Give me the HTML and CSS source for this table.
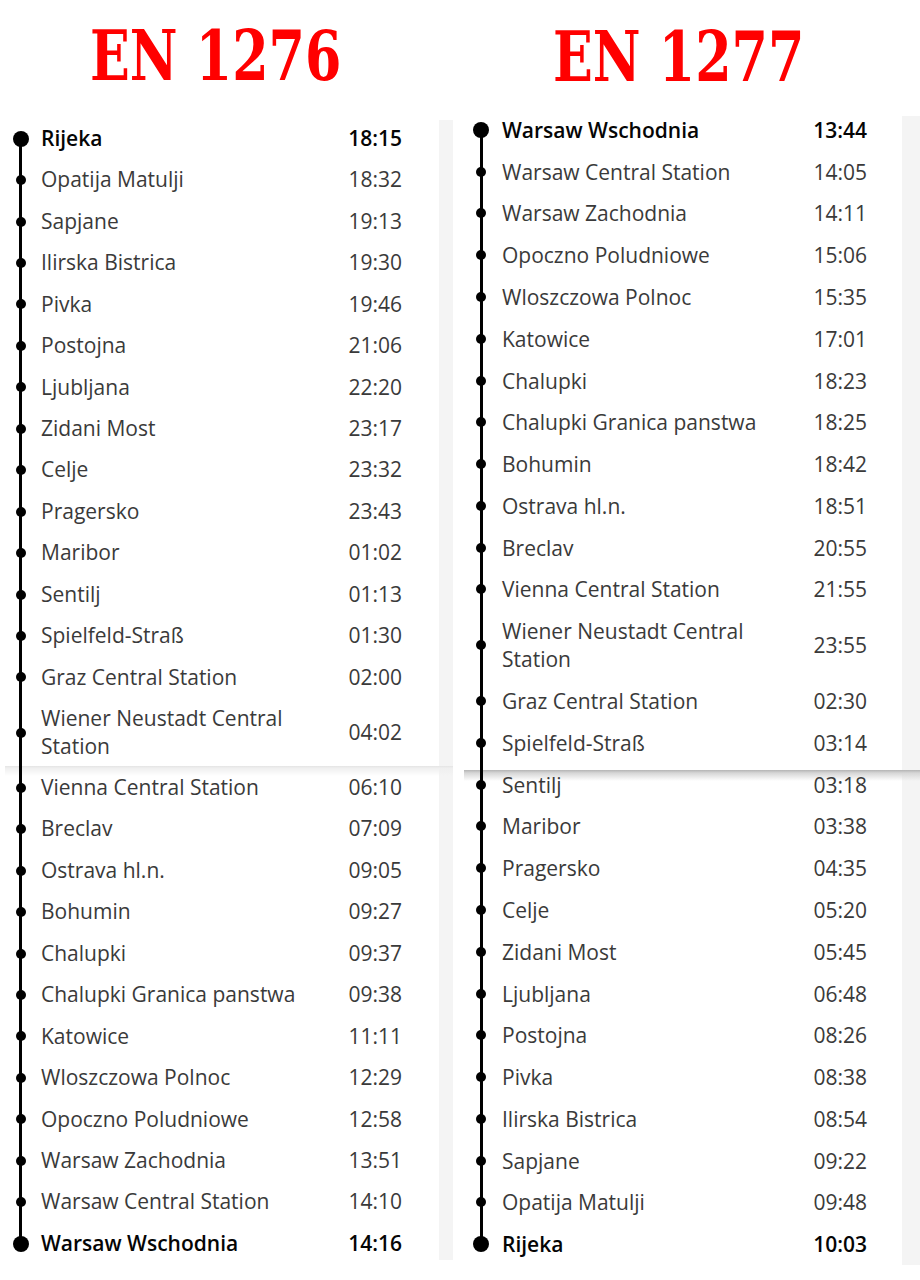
FILE: index.html
```html
<!DOCTYPE html>
<html lang="en">
<head>
<meta charset="utf-8">
<title>EN 1276 / EN 1277</title>
<link rel="stylesheet" href="styles.css">
</head>
<body>
<main class="page">
  <section class="col col--a">
    <h1 class="title"><span class="title__text">EN 1276</span></h1>
    <div class="panel">
      <div class="seam"></div>
      <ol class="stops">
        <li class="stop stop--first stop--end"><span class="mark"><span class="dot"></span></span><span class="name">Rijeka</span><span class="time">18:15</span></li>
        <li class="stop"><span class="mark"><span class="dot"></span></span><span class="name">Opatija Matulji</span><span class="time">18:32</span></li>
        <li class="stop"><span class="mark"><span class="dot"></span></span><span class="name">Sapjane</span><span class="time">19:13</span></li>
        <li class="stop"><span class="mark"><span class="dot"></span></span><span class="name">Ilirska Bistrica</span><span class="time">19:30</span></li>
        <li class="stop"><span class="mark"><span class="dot"></span></span><span class="name">Pivka</span><span class="time">19:46</span></li>
        <li class="stop"><span class="mark"><span class="dot"></span></span><span class="name">Postojna</span><span class="time">21:06</span></li>
        <li class="stop"><span class="mark"><span class="dot"></span></span><span class="name">Ljubljana</span><span class="time">22:20</span></li>
        <li class="stop"><span class="mark"><span class="dot"></span></span><span class="name">Zidani Most</span><span class="time">23:17</span></li>
        <li class="stop"><span class="mark"><span class="dot"></span></span><span class="name">Celje</span><span class="time">23:32</span></li>
        <li class="stop"><span class="mark"><span class="dot"></span></span><span class="name">Pragersko</span><span class="time">23:43</span></li>
        <li class="stop"><span class="mark"><span class="dot"></span></span><span class="name">Maribor</span><span class="time">01:02</span></li>
        <li class="stop"><span class="mark"><span class="dot"></span></span><span class="name">Sentilj</span><span class="time">01:13</span></li>
        <li class="stop"><span class="mark"><span class="dot"></span></span><span class="name">Spielfeld-Straß</span><span class="time">01:30</span></li>
        <li class="stop"><span class="mark"><span class="dot"></span></span><span class="name">Graz Central Station</span><span class="time">02:00</span></li>
        <li class="stop"><span class="mark"><span class="dot"></span></span><span class="name">Wiener Neustadt Central Station</span><span class="time">04:02</span></li>
        <li class="stop"><span class="mark"><span class="dot"></span></span><span class="name">Vienna Central Station</span><span class="time">06:10</span></li>
        <li class="stop"><span class="mark"><span class="dot"></span></span><span class="name">Breclav</span><span class="time">07:09</span></li>
        <li class="stop"><span class="mark"><span class="dot"></span></span><span class="name">Ostrava hl.n.</span><span class="time">09:05</span></li>
        <li class="stop"><span class="mark"><span class="dot"></span></span><span class="name">Bohumin</span><span class="time">09:27</span></li>
        <li class="stop"><span class="mark"><span class="dot"></span></span><span class="name">Chalupki</span><span class="time">09:37</span></li>
        <li class="stop"><span class="mark"><span class="dot"></span></span><span class="name">Chalupki Granica panstwa</span><span class="time">09:38</span></li>
        <li class="stop"><span class="mark"><span class="dot"></span></span><span class="name">Katowice</span><span class="time">11:11</span></li>
        <li class="stop"><span class="mark"><span class="dot"></span></span><span class="name">Wloszczowa Polnoc</span><span class="time">12:29</span></li>
        <li class="stop"><span class="mark"><span class="dot"></span></span><span class="name">Opoczno Poludniowe</span><span class="time">12:58</span></li>
        <li class="stop"><span class="mark"><span class="dot"></span></span><span class="name">Warsaw Zachodnia</span><span class="time">13:51</span></li>
        <li class="stop"><span class="mark"><span class="dot"></span></span><span class="name">Warsaw Central Station</span><span class="time">14:10</span></li>
        <li class="stop stop--last stop--end"><span class="mark"><span class="dot"></span></span><span class="name">Warsaw Wschodnia</span><span class="time">14:16</span></li>
      </ol>
      <div class="strip"></div>
    </div>
  </section>

  <section class="col col--b">
    <h1 class="title"><span class="title__text">EN 1277</span></h1>
    <div class="panel">
      <div class="seam"></div>
      <ol class="stops">
        <li class="stop stop--first stop--end"><span class="mark"><span class="dot"></span></span><span class="name">Warsaw Wschodnia</span><span class="time">13:44</span></li>
        <li class="stop"><span class="mark"><span class="dot"></span></span><span class="name">Warsaw Central Station</span><span class="time">14:05</span></li>
        <li class="stop"><span class="mark"><span class="dot"></span></span><span class="name">Warsaw Zachodnia</span><span class="time">14:11</span></li>
        <li class="stop"><span class="mark"><span class="dot"></span></span><span class="name">Opoczno Poludniowe</span><span class="time">15:06</span></li>
        <li class="stop"><span class="mark"><span class="dot"></span></span><span class="name">Wloszczowa Polnoc</span><span class="time">15:35</span></li>
        <li class="stop"><span class="mark"><span class="dot"></span></span><span class="name">Katowice</span><span class="time">17:01</span></li>
        <li class="stop"><span class="mark"><span class="dot"></span></span><span class="name">Chalupki</span><span class="time">18:23</span></li>
        <li class="stop"><span class="mark"><span class="dot"></span></span><span class="name">Chalupki Granica panstwa</span><span class="time">18:25</span></li>
        <li class="stop"><span class="mark"><span class="dot"></span></span><span class="name">Bohumin</span><span class="time">18:42</span></li>
        <li class="stop"><span class="mark"><span class="dot"></span></span><span class="name">Ostrava hl.n.</span><span class="time">18:51</span></li>
        <li class="stop"><span class="mark"><span class="dot"></span></span><span class="name">Breclav</span><span class="time">20:55</span></li>
        <li class="stop"><span class="mark"><span class="dot"></span></span><span class="name">Vienna Central Station</span><span class="time">21:55</span></li>
        <li class="stop"><span class="mark"><span class="dot"></span></span><span class="name">Wiener Neustadt Central Station</span><span class="time">23:55</span></li>
        <li class="stop"><span class="mark"><span class="dot"></span></span><span class="name">Graz Central Station</span><span class="time">02:30</span></li>
        <li class="stop"><span class="mark"><span class="dot"></span></span><span class="name">Spielfeld-Straß</span><span class="time">03:14</span></li>
        <li class="stop"><span class="mark"><span class="dot"></span></span><span class="name">Sentilj</span><span class="time">03:18</span></li>
        <li class="stop"><span class="mark"><span class="dot"></span></span><span class="name">Maribor</span><span class="time">03:38</span></li>
        <li class="stop"><span class="mark"><span class="dot"></span></span><span class="name">Pragersko</span><span class="time">04:35</span></li>
        <li class="stop"><span class="mark"><span class="dot"></span></span><span class="name">Celje</span><span class="time">05:20</span></li>
        <li class="stop"><span class="mark"><span class="dot"></span></span><span class="name">Zidani Most</span><span class="time">05:45</span></li>
        <li class="stop"><span class="mark"><span class="dot"></span></span><span class="name">Ljubljana</span><span class="time">06:48</span></li>
        <li class="stop"><span class="mark"><span class="dot"></span></span><span class="name">Postojna</span><span class="time">08:26</span></li>
        <li class="stop"><span class="mark"><span class="dot"></span></span><span class="name">Pivka</span><span class="time">08:38</span></li>
        <li class="stop"><span class="mark"><span class="dot"></span></span><span class="name">Ilirska Bistrica</span><span class="time">08:54</span></li>
        <li class="stop"><span class="mark"><span class="dot"></span></span><span class="name">Sapjane</span><span class="time">09:22</span></li>
        <li class="stop"><span class="mark"><span class="dot"></span></span><span class="name">Opatija Matulji</span><span class="time">09:48</span></li>
        <li class="stop stop--last stop--end"><span class="mark"><span class="dot"></span></span><span class="name">Rijeka</span><span class="time">10:03</span></li>
      </ol>
      <div class="strip"></div>
    </div>
  </section>
</main>
</body>
</html>
```

FILE: styles.css
```css
html, body {
  margin: 0;
  padding: 0;
  background: #ffffff;
}

body {
  font-family: "Open Sans", "Noto Sans", sans-serif;
}

.page {
  display: grid;
  grid-template-columns: 460px 460px;
  width: 920px;
  height: 1280px;
  overflow: hidden;
}

.col {
  display: flex;
  flex-direction: column;
}

.title {
  margin: 0;
  box-sizing: border-box;
  font-family: "DejaVu Serif Condensed", "DejaVu Serif", serif;
  font-weight: 700;
  font-size: 70px;
  line-height: 70px;
  color: #ff0000;
  white-space: nowrap;
}

.title__text {
  display: inline-block;
  transform: scaleX(0.83);
  transform-origin: 0 50%;
}

.col--a .title {
  height: 118px;
  padding: 21px 0 0 90px;
}

.col--b .title {
  height: 109px;
  padding: 22px 0 0 93px;
}

.panel {
  position: relative;
  display: flex;
}

.col--a .panel {
  width: 453px;
}

.col--b .panel {
  width: 460px;
}

.seam {
  position: absolute;
  right: 0;
  height: 12px;
  pointer-events: none;
}

.col--a .seam {
  left: 5px;
  top: 648px;
  background: linear-gradient(#e4e4e4 0, #efefef 2px, rgba(255, 255, 255, 0) 10px);
}

.col--b .seam {
  left: 4px;
  top: 661px;
  background: linear-gradient(#b4b4b4 0, #d6d6d6 3px, rgba(255, 255, 255, 0) 11px);
}

.stops {
  position: relative;
  list-style: none;
  margin: 0;
  flex: 1;
}

.col--a .stops {
  padding: 0 37px 0 0;
}

.col--b .stops {
  padding: 0 35px 0 0;
}

.strip {
  flex: 0 0 auto;
  background: #f4f4f4;
}

.col--a .strip {
  width: 14px;
  margin: 2px 0 4px;
}

.col--b .strip {
  width: 18px;
  margin: 7px 0 0;
}

.stop {
  display: flex;
  align-items: center;
  font-size: 21px;
  color: #3a3a3a;
  background-image: linear-gradient(#000000, #000000);
  background-repeat: no-repeat;
  background-size: 3px 100%;
}

.col--a .stop {
  line-height: 27.5px;
  padding: 6.975px 0;
  background-position: 19px 0;
}

.col--b .stop {
  line-height: 28px;
  padding: 6.9px 0;
  background-position: 20px 0;
}

.col--a .stop--first,
.col--b .stop--first {
  background-size: 3px 50%;
  background-position-y: 100%;
}

.col--a .stop--last,
.col--b .stop--last {
  background-size: 3px 50%;
  background-position-y: 0;
}

.mark {
  display: flex;
  justify-content: center;
  align-items: center;
}

.col--a .mark {
  flex: 0 0 41px;
}

.col--b .mark {
  flex: 0 0 42px;
}

.dot {
  width: 10px;
  height: 10px;
  border-radius: 50%;
  background: #000000;
}

.stop--end .dot {
  width: 16px;
  height: 16px;
}

.name {
  flex: 1;
}

.time {
  flex: 0 0 80px;
  text-align: right;
}

.stop--end {
  color: #050505;
  font-weight: 600;
}
```
